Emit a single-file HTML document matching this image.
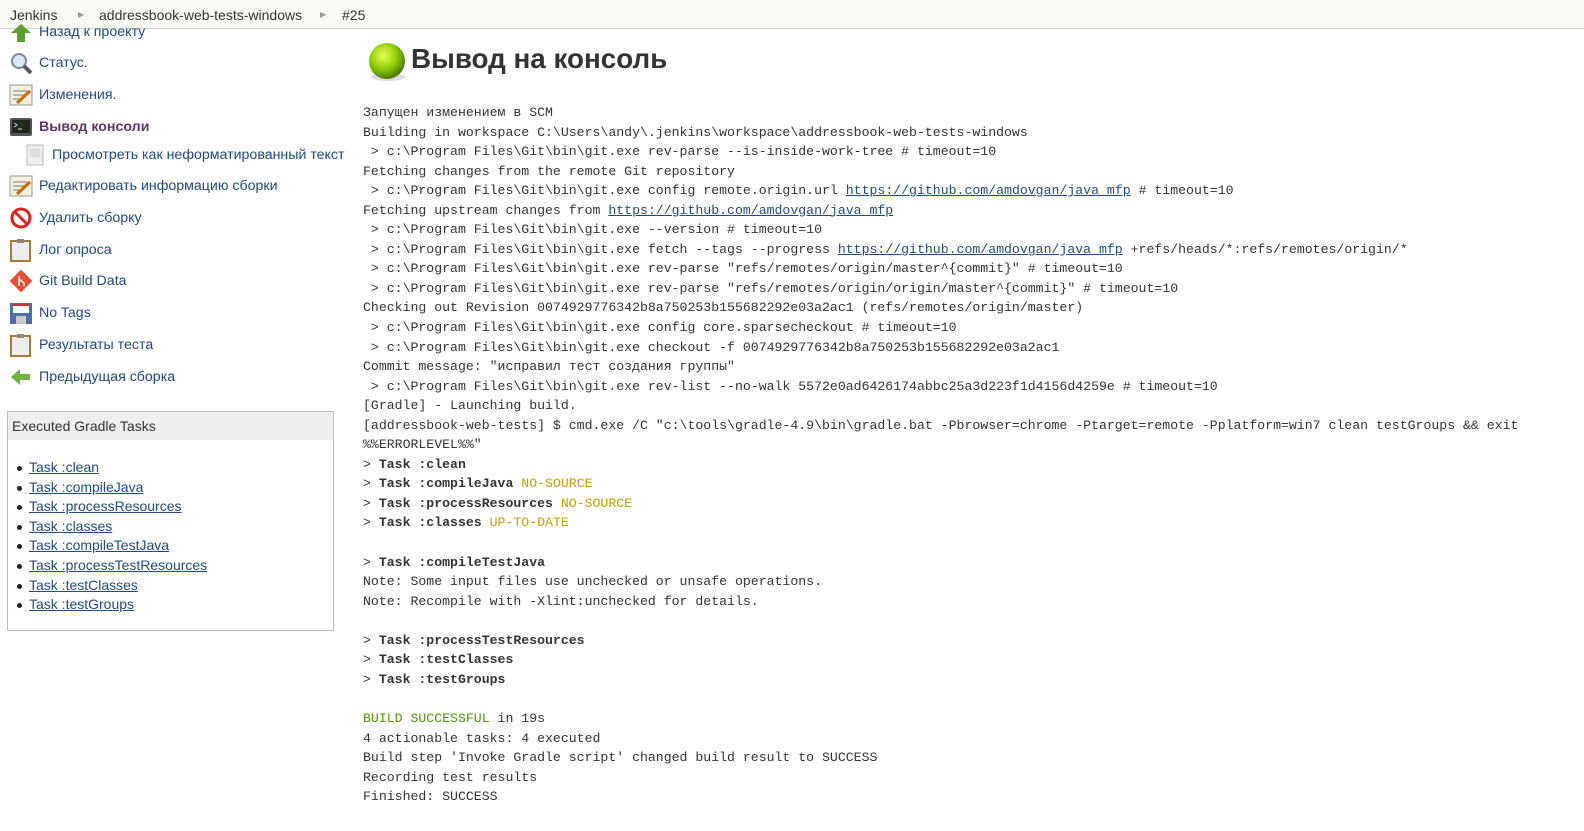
<!DOCTYPE html>
<html><head><meta charset="utf-8"><style>
body{margin:0;width:1584px;height:831px;overflow:hidden;background:#fff;font-family:"Liberation Sans",Arial,sans-serif;color:#333;position:relative}
#bc{position:absolute;left:0;top:0;width:1584px;height:28px;background:#f9faf5;border-bottom:1px solid #d3d7cf;font-size:14px;color:#333}
#bc span{position:absolute;top:7px}
#bc .ar{font-size:8px;color:#999;top:10px}
.it{position:absolute;left:9px;height:26px;font-size:14.2px;color:#204a87}
.it .t{position:absolute;left:30px;top:4px;white-space:nowrap}
.ic{position:absolute;left:0;top:0;width:24px;height:24px}
#box{position:absolute;left:7px;top:411px;width:325px;height:218px;border:1px solid #bbb}
#box .h{background:#eee;height:28px;font-size:14px;line-height:28px;padding-left:4px;color:#333}
#box ul{margin:0;padding:0;position:absolute;top:46px;left:8px;list-style:none}
#box li{font-size:14px;height:19.6px;line-height:19.6px;position:relative;padding-left:13px}
#box li:before{content:"";position:absolute;left:1px;top:8px;width:5px;height:5px;border-radius:50%;background:#222}
#box a{color:#204a87;text-decoration:underline}
h1{position:absolute;left:411px;top:43px;margin:0;font-size:27.8px;font-weight:bold;color:#333}
pre{position:absolute;left:363px;top:103px;margin:0;font-family:"Liberation Mono","Courier New",monospace;font-size:13.2px;line-height:19.55px;color:#333}
pre a{color:#204a87;text-decoration:underline}
pre b{font-weight:bold}
.y{color:#c4a000}
</style></head><body>
<div id="bc"><span style="left:10px">Jenkins</span><span class="ar" style="left:78px">▶</span><span style="left:99px">addressbook-web-tests-windows</span><span class="ar" style="left:320px">▶</span><span style="left:342px">#25</span></div>

<div class="it" style="top:20px"><svg class="ic" viewBox="0 0 24 24"><path d="M12 4 L22 13 H16 V22 H8 V13 H2 Z" fill="#5aa02c"/></svg><span class="t" style="top:4px">Назад к проекту</span></div>
<div class="it" style="top:51px"><svg class="ic" viewBox="0 0 24 24"><circle cx="10" cy="10" r="7" fill="#dbe8f5" stroke="#7a8a9a" stroke-width="2"/><path d="M15 15 L22 22" stroke="#556" stroke-width="4"/></svg><span class="t">Статус.</span></div>
<div class="it" style="top:83px"><svg class="ic" viewBox="0 0 24 24"><rect x="1" y="2" width="22" height="20" fill="#f4f0dc" stroke="#999"/><path d="M4 8h14M4 12h14M4 16h10" stroke="#777"/><path d="M8 20 L21 8" stroke="#c60" stroke-width="3"/></svg><span class="t">Изменения.</span></div>
<div class="it" style="top:115px"><svg class="ic" viewBox="0 0 24 24"><rect x="1" y="3" width="22" height="18" rx="2" fill="#555"/><rect x="3" y="5" width="18" height="13" fill="#1d2a1d"/><path d="M5 8 L8 10 L5 12 M9 14h4" stroke="#ddd" stroke-width="1"/></svg><span class="t" style="font-weight:bold;color:#5c3566">Вывод консоли</span></div>
<div class="it" style="top:143px;left:26px"><svg class="ic" viewBox="0 0 24 24"><rect x="1" y="2" width="16" height="20" fill="#eee" stroke="#bbb"/><rect x="4" y="6" width="10" height="8" fill="#ddd"/></svg><span class="t" style="left:26px">Просмотреть как неформатированный текст</span></div>
<div class="it" style="top:174px"><svg class="ic" viewBox="0 0 24 24"><rect x="1" y="2" width="22" height="20" fill="#f4f0dc" stroke="#999"/><path d="M4 8h14M4 12h14M4 16h10" stroke="#777"/><path d="M8 20 L21 8" stroke="#c60" stroke-width="3"/></svg><span class="t">Редактировать информацию сборки</span></div>
<div class="it" style="top:206px"><svg class="ic" viewBox="0 0 24 24"><circle cx="12" cy="12" r="9" fill="#fff" stroke="#d22" stroke-width="3"/><path d="M6 6 L18 18" stroke="#d22" stroke-width="3"/></svg><span class="t">Удалить сборку</span></div>
<div class="it" style="top:238px"><svg class="ic" viewBox="0 0 24 24"><rect x="2" y="3" width="19" height="20" fill="#eee" stroke="#a67c3d" stroke-width="2"/><rect x="8" y="1" width="7" height="4" fill="#888"/></svg><span class="t">Лог опроса</span></div>
<div class="it" style="top:269px"><svg class="ic" viewBox="0 0 24 24"><rect x="4" y="4" width="16" height="16" transform="rotate(45 12 12)" fill="#e84d31"/><path d="M10 7 V17 M10 10 L15 14 V17" stroke="#fff" stroke-width="1.5" fill="none"/></svg><span class="t">Git Build Data</span></div>
<div class="it" style="top:301px"><svg class="ic" viewBox="0 0 24 24"><rect x="1" y="2" width="22" height="21" fill="#4d6fa8"/><rect x="4" y="3" width="16" height="9" fill="#fff"/><rect x="4" y="3" width="16" height="2" fill="#c33"/><rect x="7" y="15" width="10" height="8" fill="#ccc"/></svg><span class="t">No Tags</span></div>
<div class="it" style="top:333px"><svg class="ic" viewBox="0 0 24 24"><rect x="2" y="3" width="19" height="20" fill="#eee" stroke="#a67c3d" stroke-width="2"/><rect x="8" y="1" width="7" height="4" fill="#888"/></svg><span class="t">Результаты теста</span></div>
<div class="it" style="top:365px"><svg class="ic" viewBox="0 0 24 24"><path d="M2 12 L11 4 V9 H21 V15 H11 V20 Z" fill="#6db33f"/></svg><span class="t">Предыдущая сборка</span></div>

<div id="box"><div class="h">Executed Gradle Tasks</div>
<ul><li><a>Task :clean</a></li><li><a>Task :compileJava</a></li><li><a>Task :processResources</a></li><li><a>Task :classes</a></li><li><a>Task :compileTestJava</a></li><li><a>Task :processTestResources</a></li><li><a>Task :testClasses</a></li><li><a>Task :testGroups</a></li></ul></div>

<svg style="position:absolute;left:367px;top:41px" width="42" height="42" viewBox="0 0 42 42"><defs><radialGradient id="g" cx="40%" cy="35%" r="65%"><stop offset="0" stop-color="#e8ff60"/><stop offset=".6" stop-color="#8cc800"/><stop offset="1" stop-color="#4a7a00"/></radialGradient></defs><ellipse cx="21" cy="36" rx="17" ry="4" fill="#ddd"/><circle cx="20" cy="20" r="18" fill="url(#g)"/></svg>
<h1>Вывод на консоль</h1>

<pre>Запущен изменением в SCM
Building in workspace C:\Users\andy\.jenkins\workspace\addressbook-web-tests-windows
 &gt; c:\Program Files\Git\bin\git.exe rev-parse --is-inside-work-tree # timeout=10
Fetching changes from the remote Git repository
 &gt; c:\Program Files\Git\bin\git.exe config remote.origin.url <a>https://github.com/amdovgan/java_mfp</a> # timeout=10
Fetching upstream changes from <a>https://github.com/amdovgan/java_mfp</a>
 &gt; c:\Program Files\Git\bin\git.exe --version # timeout=10
 &gt; c:\Program Files\Git\bin\git.exe fetch --tags --progress <a>https://github.com/amdovgan/java_mfp</a> +refs/heads/*:refs/remotes/origin/*
 &gt; c:\Program Files\Git\bin\git.exe rev-parse "refs/remotes/origin/master^{commit}" # timeout=10
 &gt; c:\Program Files\Git\bin\git.exe rev-parse "refs/remotes/origin/origin/master^{commit}" # timeout=10
Checking out Revision 0074929776342b8a750253b155682292e03a2ac1 (refs/remotes/origin/master)
 &gt; c:\Program Files\Git\bin\git.exe config core.sparsecheckout # timeout=10
 &gt; c:\Program Files\Git\bin\git.exe checkout -f 0074929776342b8a750253b155682292e03a2ac1
Commit message: "исправил тест создания группы"
 &gt; c:\Program Files\Git\bin\git.exe rev-list --no-walk 5572e0ad6426174abbc25a3d223f1d4156d4259e # timeout=10
[Gradle] - Launching build.
[addressbook-web-tests] $ cmd.exe /C "c:\tools\gradle-4.9\bin\gradle.bat -Pbrowser=chrome -Ptarget=remote -Pplatform=win7 clean testGroups &amp;&amp; exit
%%ERRORLEVEL%%"
&gt; <b>Task :clean</b>
&gt; <b>Task :compileJava</b> <span class="y">NO-SOURCE</span>
&gt; <b>Task :processResources</b> <span class="y">NO-SOURCE</span>
&gt; <b>Task :classes</b> <span class="y">UP-TO-DATE</span>

&gt; <b>Task :compileTestJava</b>
Note: Some input files use unchecked or unsafe operations.
Note: Recompile with -Xlint:unchecked for details.

&gt; <b>Task :processTestResources</b>
&gt; <b>Task :testClasses</b>
&gt; <b>Task :testGroups</b>

<span style="color:#4e9a06">BUILD SUCCESSFUL</span> in 19s
4 actionable tasks: 4 executed
Build step 'Invoke Gradle script' changed build result to SUCCESS
Recording test results
Finished: SUCCESS</pre>
</body></html>
